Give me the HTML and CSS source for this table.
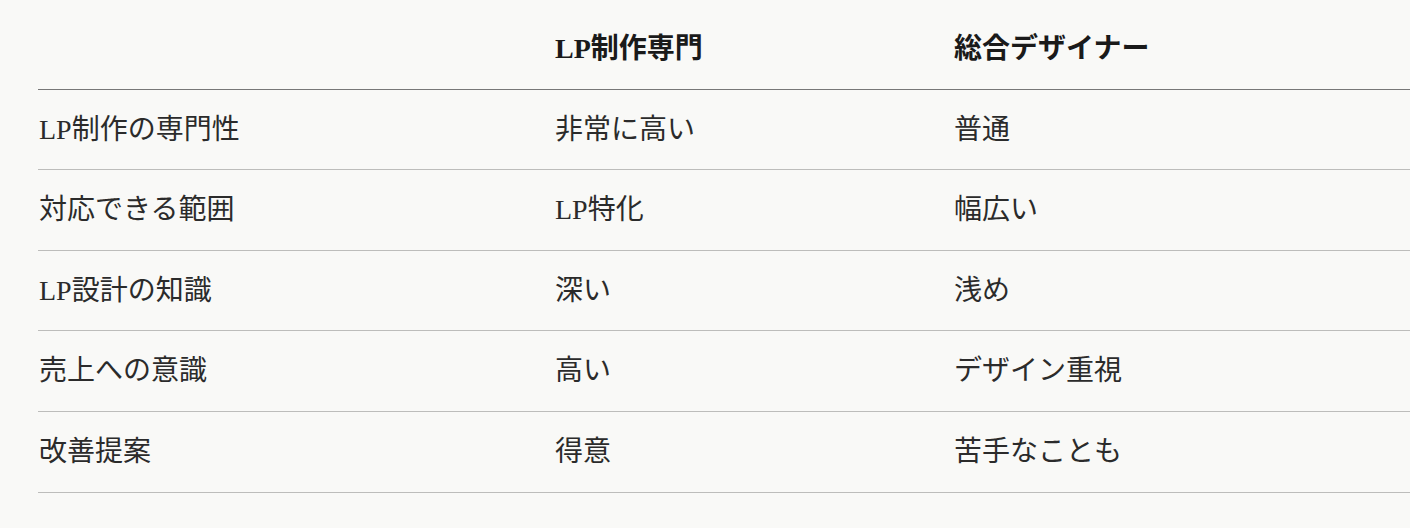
FILE: index.html
```html
<!DOCTYPE html>
<html lang="ja">
<head>
<meta charset="utf-8">
<link rel="stylesheet" href="styles.css">
</head>
<body>
<div class="wrap">
  <table class="compare">
    <colgroup>
      <col class="c1">
      <col class="c2">
      <col class="c3">
    </colgroup>
    <thead>
      <tr><th></th><th>LP制作専門</th><th>総合デザイナー</th></tr>
    </thead>
    <tbody>
      <tr><td>LP制作の専門性</td><td>非常に高い</td><td>普通</td></tr>
      <tr><td>対応できる範囲</td><td>LP特化</td><td>幅広い</td></tr>
      <tr><td>LP設計の知識</td><td>深い</td><td>浅め</td></tr>
      <tr><td>売上への意識</td><td>高い</td><td>デザイン重視</td></tr>
      <tr><td>改善提案</td><td>得意</td><td>苦手なことも</td></tr>
    </tbody>
  </table>
</div>
</body>
</html>
```
FILE: styles.css
```css
html, body {
  margin: 0;
  padding: 0;
  background: #f9f9f7;
}
body {
  font-family: "Liberation Serif", "Noto Sans CJK JP", serif;
  color: #2b2b2b;
  overflow: hidden;
}
.wrap {
  padding: 9px 0 0 38px;
}
.compare {
  width: 100%;
  border-collapse: collapse;
  table-layout: fixed;
  font-size: 28px;
  line-height: 1.7;
}
.c1 { width: 516px; }
.c2 { width: 399px; }
.c3 { width: auto; }
.compare th,
.compare td {
  text-align: left;
  padding: 16px 0 16px 1px;
  vertical-align: middle;
}
.compare th {
  font-weight: 700;
  color: #1a1a1a;
  border-bottom: 1px solid #777;
}
.compare td {
  font-weight: 400;
  border-bottom: 1px solid #bdbdbb;
}
```
